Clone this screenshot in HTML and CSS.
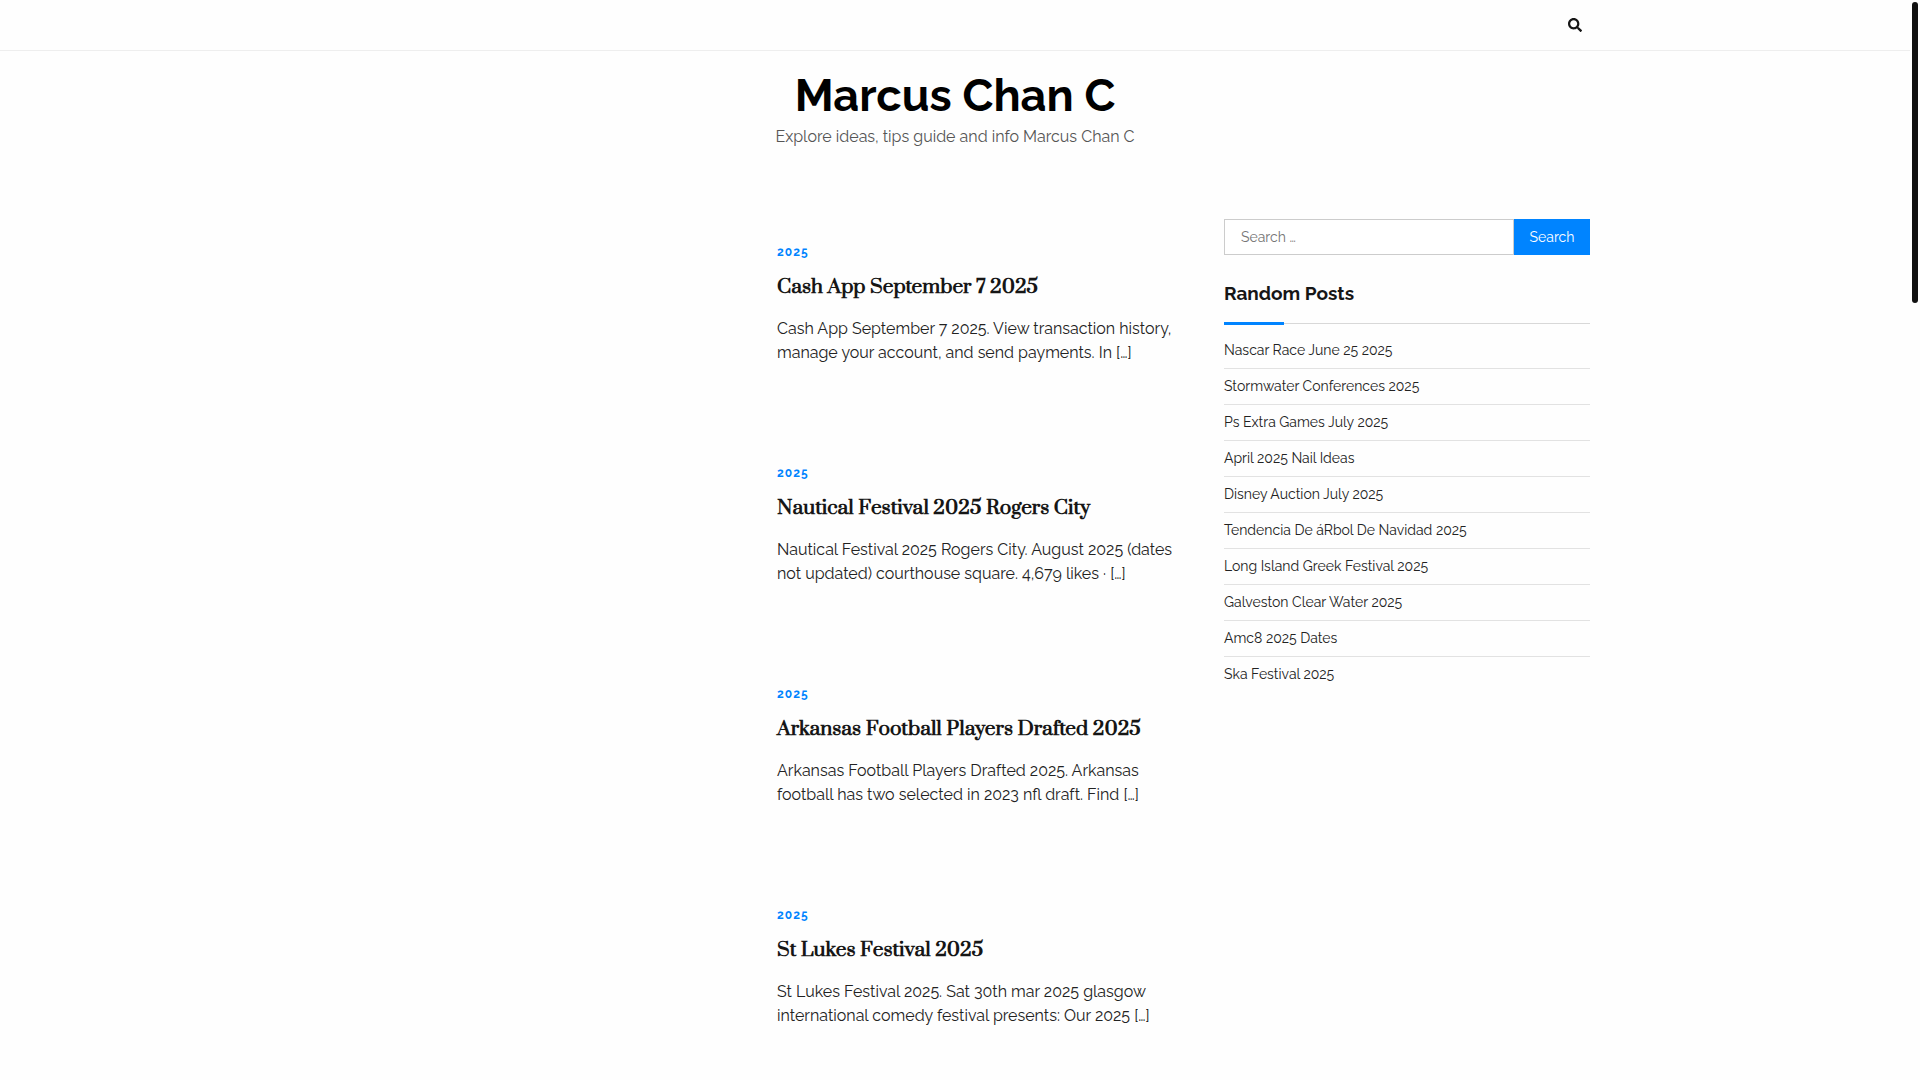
FILE: index.html
```
<!DOCTYPE html>
<html lang="en">
  <head>
    <meta charset="UTF-8" />
    <meta name="viewport" content="width=device-width, initial-scale=1.0" />
    <title>Marcus Chan C</title>
    <link rel="stylesheet" href="styles.css">
  </head>
  <body>
    <div class="top-bar">
      <div class="container">
        <button type="button" class="search-toggle" aria-label="Open search">
          <svg viewBox="0 0 512 512" width="14" height="14" fill="currentColor">
            <path d="M505 442.7L405.3 343c-4.500-4.500-10.600-7-17-7H372c27.600-35.300 44-79.700 44-128C416 93.100 322.900 0 208 0S0 93.100 0 208s93.100 208 208 208c48.300 0 92.700-16.400 128-44v16.300c0 6.400 2.500 12.500 7 17l99.700 99.700c9.400 9.400 24.600 9.400 33.900 0l28.300-28.300c9.400-9.400 9.400-24.600.1-34zM208 336c-70.700 0-128-57.200-128-128 0-70.700 57.200-128 128-128 70.700 0 128 57.200 128 128 0 70.700-57.200 128-128 128z" />
          </svg>
        </button>
      </div>
    </div>

    <header class="site-header">
      <h1 class="site-title"><a href="#">Marcus Chan C</a></h1>
      <p class="site-description">Explore ideas, tips guide and info Marcus Chan C</p>
    </header>

    <div class="container content">
      <main class="posts">
        <article class="post">
          <a href="#" class="post-category">2025</a>
          <h2 class="post-title"><a href="#">Cash App September 7 2025</a></h2>
          <p>Cash App September 7 2025. View transaction history, manage your account, and send payments. In […]</p>
        </article>

        <article class="post">
          <a href="#" class="post-category">2025</a>
          <h2 class="post-title"><a href="#">Nautical Festival 2025 Rogers City</a></h2>
          <p>Nautical Festival 2025 Rogers City. August 2025 (dates not updated) courthouse square. 4,679 likes · […]</p>
        </article>

        <article class="post">
          <a href="#" class="post-category">2025</a>
          <h2 class="post-title"><a href="#">Arkansas Football Players Drafted 2025</a></h2>
          <p>Arkansas Football Players Drafted 2025. Arkansas football has two selected in 2023 nfl draft. Find […]</p>
        </article>

        <article class="post">
          <a href="#" class="post-category">2025</a>
          <h2 class="post-title"><a href="#">St Lukes Festival 2025</a></h2>
          <p>St Lukes Festival 2025. Sat 30th mar 2025 glasgow international comedy festival presents: Our 2025 […]</p>
        </article>
      </main>

      <aside class="sidebar">
        <form class="search-form" role="search">
          <input type="search" name="s" placeholder="Search …" aria-label="Search for" />
          <button type="submit">Search</button>
        </form>

        <section class="widget">
          <h2 class="widget-title">Random Posts</h2>
          <ul>
            <li><a href="#">Nascar Race June 25 2025</a></li>
            <li><a href="#">Stormwater Conferences 2025</a></li>
            <li><a href="#">Ps Extra Games July 2025</a></li>
            <li><a href="#">April 2025 Nail Ideas</a></li>
            <li><a href="#">Disney Auction July 2025</a></li>
            <li><a href="#">Tendencia De áRbol De Navidad 2025</a></li>
            <li><a href="#">Long Island Greek Festival 2025</a></li>
            <li><a href="#">Galveston Clear Water 2025</a></li>
            <li><a href="#">Amc8 2025 Dates</a></li>
            <li><a href="#">Ska Festival 2025</a></li>
          </ul>
        </section>
      </aside>
    </div>

    <div class="scroll-thumb"></div>
  </body>
</html>
```
FILE: styles.css
```
* {
  box-sizing: border-box;
}
body {
  margin: 0;
  padding-right: 10px;
  background: #fefefe;
  color: #222;
  font-family: Raleway, "Open Sans", sans-serif;
  font-size: 16px;
  line-height: 24px;
}
a {
  color: inherit;
  text-decoration: none;
}
h1,
h2,
p,
ul {
  margin: 0;
  padding: 0;
}
.container {
  max-width: 1300px;
  margin: 0 auto;
  padding: 0 15px;
}

/* top bar */
.top-bar {
  border-bottom: 1px solid #eee;
}
.top-bar .container {
  display: flex;
  justify-content: flex-end;
}
.search-toggle {
  display: flex;
  align-items: center;
  height: 50px;
  padding: 0 8px;
  border: none;
  background: none;
  color: #161616;
  cursor: pointer;
}

/* site header */
.site-header {
  padding: 18px 15px 54px;
  text-align: center;
}
.site-title {
  margin-bottom: 2px;
  color: #000;
  font-size: 45px;
  font-weight: 700;
  line-height: 54px;
}
.site-description {
  color: #555;
}

/* posts and sidebar */
.content {
  display: grid;
  grid-template-columns: minmax(0, 1fr) 366px;
  gap: 40px;
  padding-top: 16px;
}
.posts {
  padding-left: calc(50% + 25px);
}
.post {
  padding: 21px 0 55px;
}
.post-category {
  display: block;
  color: #0084ff;
  font-size: 12px;
  font-weight: 700;
  letter-spacing: 1px;
}
.post-title {
  margin: 9px 0 16px;
  color: #161616;
  font-family: Prata, "Liberation Serif", serif;
  font-size: 19px;
  font-weight: 700;
  line-height: 28px;
}
.post p {
  padding-bottom: 20px;
}

.search-form {
  display: flex;
}
.search-form input {
  flex: 1;
  min-width: 0;
  height: 36px;
  padding: 0 16px;
  border: 1px solid #ccc;
  border-radius: 0;
  background: #fff;
  font: inherit;
  font-size: 14px;
}
.search-form input::placeholder {
  color: #757575;
}
.search-form button {
  width: 76px;
  height: 36px;
  padding: 0;
  border: none;
  background: #0084ff;
  color: #fff;
  font: inherit;
  font-size: 14px;
  cursor: pointer;
}
.widget {
  margin-top: 24px;
}
.widget-title {
  position: relative;
  padding-bottom: 16px;
  border-bottom: 1px solid #d8d8d8;
  color: #161616;
  font-size: 19px;
  font-weight: 700;
  line-height: 28px;
}
.widget-title::after {
  content: "";
  position: absolute;
  left: 0;
  bottom: -2px;
  width: 60px;
  height: 3px;
  background: #0084ff;
}
.widget ul {
  padding-top: 9px;
  list-style: none;
}
.widget li {
  padding: 6px 0;
  border-bottom: 1px solid #e2e2e2;
  font-size: 14px;
  line-height: 23px;
}
.widget li:last-child {
  border-bottom: none;
}

.scroll-thumb {
  position: fixed;
  top: 2px;
  right: 2px;
  width: 6px;
  height: 301px;
  border-radius: 3px;
  background: #111;
}
```
